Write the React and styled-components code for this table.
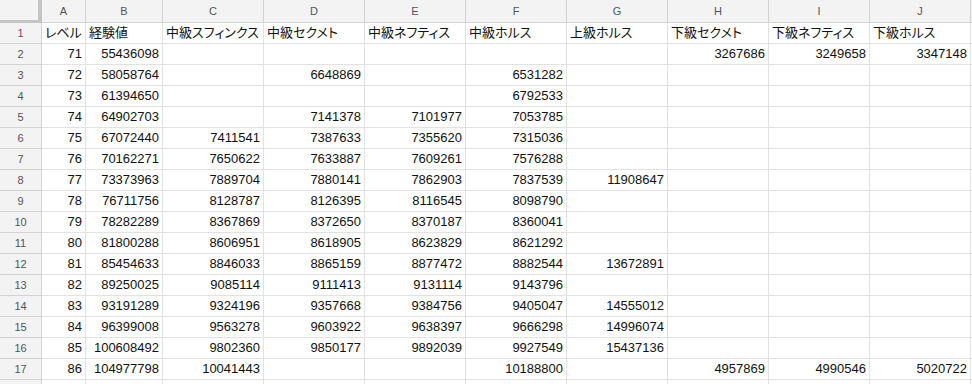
import React from "react";
import styled, { createGlobalStyle } from "styled-components";

const Global = createGlobalStyle`
  html, body { margin: 0; padding: 0; background: #fff; overflow: hidden; }
  body { font-family: "Liberation Sans", Arial, "Noto Sans CJK JP", sans-serif; }
`;

const COLS = ["A", "B", "C", "D", "E", "F", "G", "H", "I", "J", ""];

const Sheet = styled.div`
  display: grid;
  grid-template-columns: 42px 44px 77px repeat(8, 101px) 1fr;
  grid-auto-rows: 21px;
  grid-template-rows: 23px;
  width: 972px;
  height: 384px;
  overflow: hidden;
`;

const Corner = styled.div`
  box-sizing: border-box;
  background: #f3f3f3;
  border-right: 4px solid #c4c4c4;
  border-bottom: 3px solid #c4c4c4;
`;

const HeadBase = styled.div`
  box-sizing: border-box;
  background: #f3f3f3;
  border-right: 1px solid #d2d2d2;
  border-bottom: 1px solid #d2d2d2;
  display: flex;
  align-items: center;
  justify-content: center;
  font-size: 11px;
  color: #555;
  overflow: hidden;
`;

const ColHead = styled(HeadBase)``;
const RowHead = styled(HeadBase)``;

const Cell = styled.div`
  box-sizing: border-box;
  border-right: 1px solid #e2e2e2;
  border-bottom: 1px solid #e2e2e2;
  display: flex;
  align-items: center;
  justify-content: ${(p) => (p.$num ? "flex-end" : "flex-start")};
  padding: 0 3px;
  font-size: 13px;
  line-height: 20px;
  color: #111;
  white-space: nowrap;
  overflow: hidden;
  font-family: "Liberation Sans", Arial, "Noto Sans CJK JP", sans-serif;
  font-feature-settings: "palt";
`;

const header = ["レベル", "経験値", "中級スフィンクス", "中級セクメト", "中級ネフティス", "中級ホルス", "上級ホルス", "下級セクメト", "下級ネフティス", "下級ホルス"];

const data = [
  [71, 55436098, "", "", "", "", "", 3267686, 3249658, 3347148],
  [72, 58058764, "", 6648869, "", 6531282, "", "", "", ""],
  [73, 61394650, "", "", "", 6792533, "", "", "", ""],
  [74, 64902703, "", 7141378, 7101977, 7053785, "", "", "", ""],
  [75, 67072440, 7411541, 7387633, 7355620, 7315036, "", "", "", ""],
  [76, 70162271, 7650622, 7633887, 7609261, 7576288, "", "", "", ""],
  [77, 73373963, 7889704, 7880141, 7862903, 7837539, 11908647, "", "", ""],
  [78, 76711756, 8128787, 8126395, 8116545, 8098790, "", "", "", ""],
  [79, 78282289, 8367869, 8372650, 8370187, 8360041, "", "", "", ""],
  [80, 81800288, 8606951, 8618905, 8623829, 8621292, "", "", "", ""],
  [81, 85454633, 8846033, 8865159, 8877472, 8882544, 13672891, "", "", ""],
  [82, 89250025, 9085114, 9111413, 9131114, 9143796, "", "", "", ""],
  [83, 93191289, 9324196, 9357668, 9384756, 9405047, 14555012, "", "", ""],
  [84, 96399008, 9563278, 9603922, 9638397, 9666298, 14996074, "", "", ""],
  [85, 100608492, 9802360, 9850177, 9892039, 9927549, 15437136, "", "", ""],
  [86, 104977798, 10041443, "", "", 10188800, "", 4957869, 4990546, 5020722],
];

export default function App() {
  return (
    <>
      <Global />
      <Sheet>
        <Corner />
        {COLS.map((c, i) => (
          <ColHead key={"h" + i}>{c}</ColHead>
        ))}
        <RowHead>1</RowHead>
        {header.map((h, i) => (
          <Cell key={"t" + i}>{h}</Cell>
        ))}
        <Cell />
        {data.map((row, r) => (
          <React.Fragment key={r}>
            <RowHead>{r + 2}</RowHead>
            {row.map((v, i) => (
              <Cell key={i} $num>
                {v}
              </Cell>
            ))}
            <Cell />
          </React.Fragment>
        ))}
        <RowHead />
        {COLS.map((c, i) => (
          <Cell key={"e" + i} />
        ))}
      </Sheet>
    </>
  );
}
